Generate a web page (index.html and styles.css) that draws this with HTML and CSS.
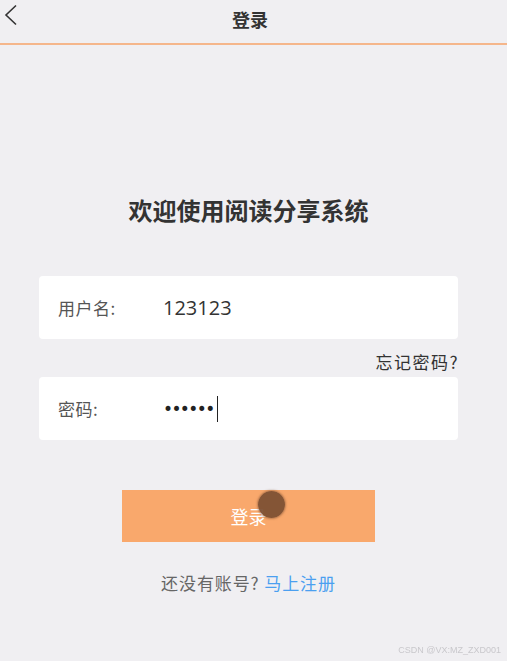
FILE: index.html
```html
<!DOCTYPE html>
<html lang="zh-CN">
<head>
    <meta charset="UTF-8">
    <meta name="viewport" content="width=device-width, initial-scale=1.0">
    <title>登录</title>
    <link rel="stylesheet" href="styles.css">
</head>
<body>
    <!-- Top bar -->
    <header class="nav-bar">
        <a href="#" class="nav-back">
            <svg width="14" height="22" viewBox="0 0 14 22">
                <polyline points="12,1.5 2,11 12,20.5" fill="none" stroke="#333" stroke-width="1.6"/>
            </svg>
        </a>
        <span class="nav-title">登录</span>
    </header>

    <main class="login-page">
        <h1 class="welcome">欢迎使用阅读分享系统</h1>

        <div class="field-card">
            <span class="field-label">用户名:</span>
            <span class="field-value">123123</span>
        </div>

        <div class="forgot-row">
            <a href="#" class="forgot-link">忘记密码?</a>
        </div>

        <div class="field-card">
            <span class="field-label">密码:</span>
            <span class="field-value dots">••••••</span><span class="caret"></span>
        </div>

        <div class="btn-row">
            <button class="login-btn">登录<span class="touch-dot"></span></button>
        </div>

        <p class="register-tip">还没有账号? <a href="#">马上注册</a></p>
    </main>

    <div class="watermark">CSDN @VX:MZ_ZXD001</div>
</body>
</html>
```

FILE: styles.css
```css
:root {
    --bg: #f0eff2;
    --orange: #f9a86c;
    --text: #333;
    --muted: #555;
    --link: #4b9ff0;
}

* {
    box-sizing: border-box;
    margin: 0;
    padding: 0;
}

body {
    background: var(--bg);
    font-family: "Noto Sans CJK SC", "Noto Sans", sans-serif;
    color: var(--text);
    min-height: 100vh;
}

.nav-bar {
    height: 45px;
    border-bottom: 2px solid #f5b68b;
    display: flex;
    align-items: center;
    justify-content: center;
    position: relative;
}

.nav-back {
    position: absolute;
    left: 4px;
    top: 4px;
    display: flex;
}

.nav-title {
    font-size: 18px;
    font-weight: 700;
    line-height: 1;
    margin-top: -6px;
    margin-left: -7px;
}

.login-page {
    margin: 0 49px 0 39px;
    display: flex;
    flex-direction: column;
}

.welcome {
    margin-top: 147px;
    margin-bottom: 48px;
    text-align: center;
    font-size: 24px;
    line-height: 36px;
    font-weight: 700;
    color: #333;
}

.field-card {
    height: 63px;
    background: #fff;
    border-radius: 4px;
    display: flex;
    align-items: center;
    padding-left: 19px;
}

.field-label {
    width: 105px;
    font-size: 17px;
    letter-spacing: 0.5px;
    color: var(--muted);
}

.field-value {
    font-family: "Open Sans", "Noto Sans", sans-serif;
    font-size: 20px;
    color: #333;
}

.dots {
    font-family: "DejaVu Sans", sans-serif;
    font-size: 17px;
    letter-spacing: -1.6px;
    color: #222;
}

.caret {
    width: 1.5px;
    height: 26px;
    background: #222;
    margin-left: 3px;
}

.forgot-row {
    display: flex;
    justify-content: flex-end;
    padding: 12px 0 4px;
}

.forgot-link {
    font-size: 17px;
    line-height: 22px;
    letter-spacing: 1.5px;
    margin-right: -1px;
    color: #333;
    text-decoration: none;
}

.btn-row {
    display: flex;
    justify-content: center;
    margin-top: 50px;
}

.login-btn {
    width: 253px;
    height: 52px;
    background: var(--orange);
    border: none;
    color: #fff;
    font-family: inherit;
    font-size: 18px;
    position: relative;
    cursor: pointer;
}

.touch-dot {
    position: absolute;
    left: 136px;
    top: 1px;
    width: 27px;
    height: 27px;
    border-radius: 50%;
    background: rgba(125, 80, 52, 0.95);
    box-shadow: 0 0 2px 1px rgba(125, 80, 52, 0.5);
}

.register-tip {
    margin-top: 28px;
    text-align: center;
    font-size: 17px;
    line-height: 26px;
    letter-spacing: 0.9px;
    color: #666;
}

.register-tip a {
    color: var(--link);
    text-decoration: none;
}

.watermark {
    position: fixed;
    right: 6px;
    bottom: 6px;
    font-family: "Liberation Sans", sans-serif;
    font-size: 9px;
    color: #c9c8cc;
}
```
